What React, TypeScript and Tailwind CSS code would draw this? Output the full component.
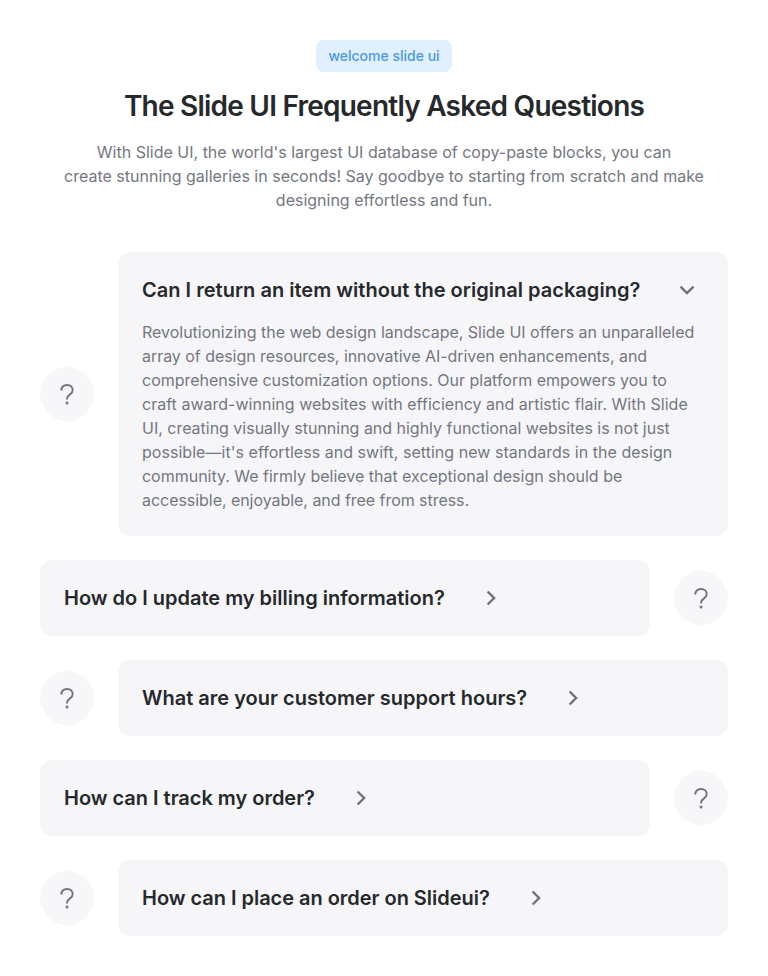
import React from 'react';

const questions = [
  { title: 'Can I return an item without the original packaging?', open: true, fit: 'tracking-[0.02px]' },
  { title: 'How do I update my billing information?', open: false, fit: 'tracking-[-0.01px]' },
  { title: 'What are your customer support hours?', open: false, fit: 'tracking-[0.01px]' },
  { title: 'How can I track my order?', open: false, fit: 'tracking-[-0.02px]' },
  { title: 'How can I place an order on Slideui?', open: false, fit: 'tracking-[-0.03px]' },
];

const answer = [
  { text: 'Revolutionizing the web design landscape, Slide UI offers an unparalleled', fit: 'tracking-[-0.014px]' },
  { text: 'array of design resources, innovative AI-driven enhancements, and', fit: 'tracking-[-0.046px]' },
  { text: 'comprehensive customization options. Our platform empowers you to', fit: 'tracking-[-0.015px]' },
  { text: 'craft award-winning websites with efficiency and artistic flair. With Slide', fit: 'tracking-[0.022px]' },
  { text: 'UI, creating visually stunning and highly functional websites is not just', fit: 'tracking-[-0.014px]' },
  { text: "possible—it's effortless and swift, setting new standards in the design", fit: 'tracking-[0.036px]' },
  { text: 'community. We firmly believe that exceptional design should be', fit: 'tracking-[-0.016px]' },
  { text: 'accessible, enjoyable, and free from stress.', fit: 'tracking-[-0.045px]' },
];

function QuestionBadge() {
  return (
    <div className="flex size-[54px] shrink-0 items-center justify-center rounded-full bg-[#f7f7f9] text-[#6f727c]">
      <svg width="24" height="24" viewBox="0 0 24 24" fill="none" stroke="currentColor" strokeWidth="1.9">
        <path d="M6.3 8.4C6.3 5.2 8.6 3 12 3s5.7 2.1 5.7 5.1c0 2.2-1.1 3.3-2.9 4.5-2 1.3-2.8 2.2-2.8 4.3v.7" />
        <circle cx="12" cy="20.9" r="1.5" fill="currentColor" stroke="none" />
      </svg>
    </div>
  );
}

function Chevron({ open }: { open: boolean }) {
  return (
    <svg
      className={open ? 'ml-px shrink-0 text-[#6f727c]' : 'shrink-0 -rotate-90 text-[#6f727c]'}
      width="24"
      height="24"
      viewBox="0 0 24 24"
      fill="none"
      stroke="currentColor"
      strokeWidth="2.4"
    >
      <path d="M5.5 8.6 12 15.1l6.5-6.5" />
    </svg>
  );
}

export default function App() {
  return (
    <main className="min-h-screen bg-white p-10 font-['Inter',sans-serif] text-[#26292c]">
      <header className="flex flex-col items-center text-center">
        <span className="flex h-8 items-center rounded-lg bg-[#e0f0ff] px-3 text-sm font-medium text-[#4a98e4]">
          welcome slide ui
        </span>
        <h1 className="mt-4 text-[28px] leading-9 font-semibold tracking-[-0.77px] whitespace-nowrap">
          The Slide UI Frequently Asked Questions
        </h1>
        <p className="mt-4 text-base whitespace-nowrap text-[#74777f]">
          With Slide UI, the world's largest UI database of copy-paste blocks, you can
          <br />
          create stunning galleries in seconds! Say goodbye to starting from scratch and make
          <br />
          designing effortless and fun.
        </p>
      </header>
      <div className="mt-10 flex flex-col gap-6">
        {questions.map((q, i) => (
          <div key={q.title} className={i % 2 ? 'flex flex-row-reverse items-center gap-6' : 'flex items-center gap-6'}>
            <QuestionBadge />
            <section className="min-w-0 flex-1 rounded-xl bg-[#f6f6f9] p-6">
              <button className="flex h-7 items-center gap-[34px] text-left text-xl font-semibold whitespace-nowrap">
                <span className={q.fit}>{q.title}</span>
                <Chevron open={q.open} />
              </button>
              {q.open && (
                <p className="mt-4 text-base whitespace-nowrap text-[#74777f]">
                  {answer.map((line) => (
                    <span key={line.text} className={`block ${line.fit}`}>
                      {line.text}
                    </span>
                  ))}
                </p>
              )}
            </section>
          </div>
        ))}
      </div>
    </main>
  );
}
